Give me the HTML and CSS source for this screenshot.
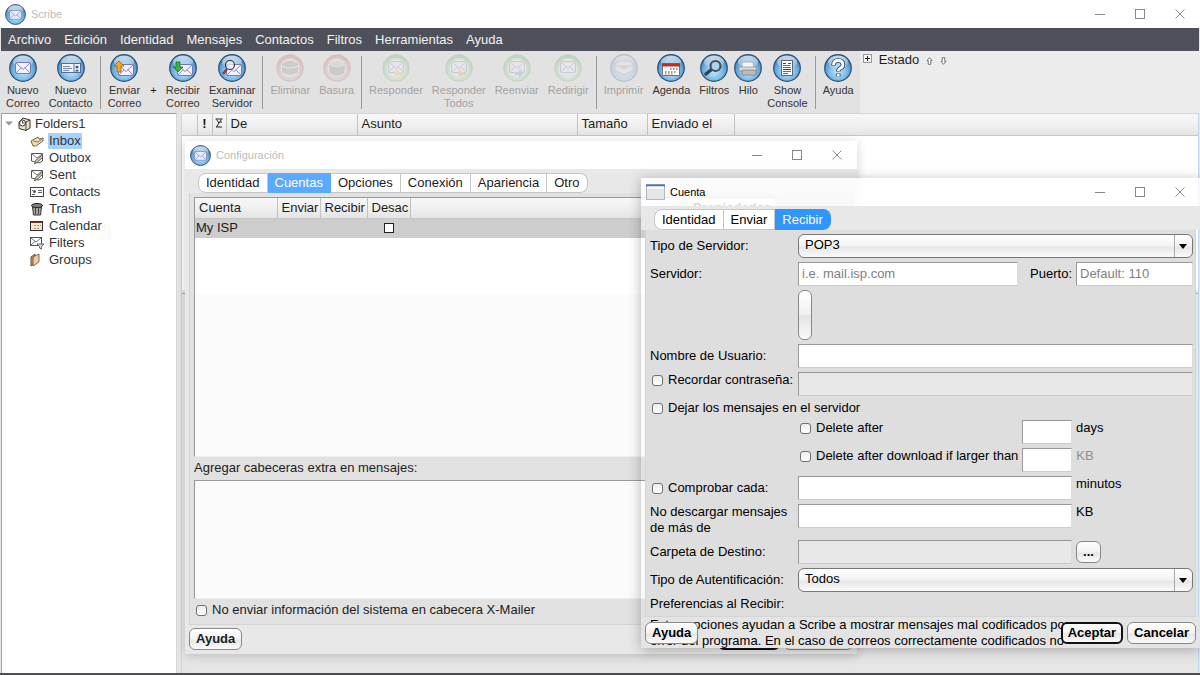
FILE: index.html
```
<!doctype html>
<html lang="es">

<head>
    <meta charset="UTF-8" />
    <meta name="viewport" content="width=device-width, initial-scale=1.0" />
    <title>Scribe</title>
    <link rel="stylesheet" href="styles.css">
</head>

<body>

    <!-- shared icon shapes -->
    <svg class="sprites" width="0" height="0" aria-hidden="true">
        <defs>
            <radialGradient id="blue" cx="50%" cy="62%" r="58%">
                <stop offset="0" stop-color="#c4ecff" />
                <stop offset="0.5" stop-color="#86c2ec" />
                <stop offset="0.85" stop-color="#5595ca" />
                <stop offset="1" stop-color="#346a99" />
            </radialGradient>
            <radialGradient id="red" cx="50%" cy="60%" r="58%">
                <stop offset="0" stop-color="#e0c8c8" />
                <stop offset="0.6" stop-color="#cfa0a0" />
                <stop offset="1" stop-color="#b03c3c" />
            </radialGradient>
            <radialGradient id="green" cx="50%" cy="60%" r="58%">
                <stop offset="0" stop-color="#e0f5e0" />
                <stop offset="0.6" stop-color="#a5dba5" />
                <stop offset="1" stop-color="#3ea03e" />
            </radialGradient>
            <linearGradient id="shine" x1="0" y1="0" x2="0" y2="1">
                <stop offset="0" stop-color="#fff" stop-opacity="0.75" />
                <stop offset="1" stop-color="#fff" stop-opacity="0.1" />
            </linearGradient>
        </defs>
        <symbol id="orb" viewBox="0 0 28 28">
            <circle cx="14" cy="14" r="13.3" fill="url(#blue)" stroke="#2b5076" stroke-width="1.2" />
            <ellipse cx="14" cy="8" rx="10" ry="6.5" fill="url(#shine)" />
        </symbol>
        <symbol id="orb-red" viewBox="0 0 28 28">
            <circle cx="14" cy="14" r="13.3" fill="url(#red)" stroke="#a55" />
            <circle cx="14" cy="14" r="9.5" fill="#ddd" />
        </symbol>
        <symbol id="orb-green" viewBox="0 0 28 28">
            <circle cx="14" cy="14" r="13.3" fill="url(#green)" stroke="#5a5" />
            <circle cx="14" cy="14" r="9.5" fill="#e4f0e4" />
        </symbol>
        <symbol id="mail" viewBox="0 0 16 12">
            <rect x="0.5" y="0.5" width="15" height="11" rx="1" fill="#f4f3ff" stroke="#7478b4" />
            <path d="M1 11l5.2-5.4M15 11L9.800 5.600M1 1l7 6.500L15 1" fill="none" stroke="#8488cc" />
        </symbol>
        <symbol id="sheet" viewBox="0 0 14 14">
            <path d="M1.500 2.500h11v7.500L9 12 1.500 10z" fill="#fff" stroke="#555" />
            <path d="M2 3l5 4 5-4" fill="none" stroke="#777" />
            <path d="M4.500 13l1-3.500 6-5 1.500 1.500-6 5.500z" fill="#d8c4a4" stroke="#444" stroke-width="0.8" />
        </symbol>
        <symbol id="min" viewBox="0 0 12 12"><path d="M1 6.500h10" stroke="currentColor" /></symbol>
        <symbol id="max" viewBox="0 0 12 12"><rect x="1.500" y="1.500" width="9" height="9" fill="none" stroke="currentColor" /></symbol>
        <symbol id="close" viewBox="0 0 12 12"><path d="M1.500 1.500l9 9M10.500 1.500l-9 9" stroke="currentColor" stroke-width="0.9" /></symbol>
    </svg>

    <div class="app">
        <header class="titlebar">
            <svg class="app-icon" viewBox="0 0 28 28"><use href="#orb" /><use href="#mail" x="5" y="8" width="18" height="13" opacity="0.8" /></svg>
            <span class="title faded">Scribe</span>
            <div class="winbtns">
                <button aria-label="Minimizar"><svg><use href="#min" /></svg></button>
                <button aria-label="Maximizar"><svg><use href="#max" /></svg></button>
                <button aria-label="Cerrar"><svg><use href="#close" /></svg></button>
            </div>
        </header>

        <nav class="menubar">
            <a href="#">Archivo</a>
            <a href="#">Edición</a>
            <a href="#">Identidad</a>
            <a href="#">Mensajes</a>
            <a href="#">Contactos</a>
            <a href="#">Filtros</a>
            <a href="#">Herramientas</a>
            <a href="#">Ayuda</a>
        </nav>

        <div class="toolrow">
            <div class="toolbar">
                <button class="tool">
                    <svg viewBox="0 0 28 28"><use href="#orb" /><use href="#mail" x="6" y="8" width="16" height="12" /></svg>
                    <span>Nuevo<br>Correo</span>
                </button>
                <button class="tool">
                    <svg viewBox="0 0 28 28"><use href="#orb" />
                        <rect x="4.500" y="9.500" width="19" height="9" fill="#f4f5fc" stroke="#566a94" />
                        <path d="M6 12.500h7M6 14.500h9M6 16.500h6" stroke="#7c86b4" />
                        <path d="M17 10v8" stroke="#566a94" /><circle cx="20" cy="13" r="1.500" fill="#43548a" /><path d="M18 17.500q2-4 4 0z" fill="#43548a" />
                    </svg>
                    <span>Nuevo<br>Contacto</span>
                </button>
                <span class="sep"></span>
                <button class="tool">
                    <svg viewBox="0 0 28 28"><use href="#orb" /><use href="#mail" x="8" y="10" width="16" height="12" />
                        <path d="M9 7l5 5h-3v6H7v-6H4z" fill="#f2a81c" stroke="#9a6410" stroke-width="0.8" /></svg>
                    <span>Enviar<br>Correo</span>
                </button>
                <span class="plus">+</span>
                <button class="tool">
                    <svg viewBox="0 0 28 28"><use href="#orb" /><use href="#mail" x="8" y="10" width="16" height="12" />
                        <path d="M9 18l-5-5h3V8h4v5h3z" fill="#35b83c" stroke="#17701e" stroke-width="0.8" /></svg>
                    <span>Recibir<br>Correo</span>
                </button>
                <button class="tool">
                    <svg viewBox="0 0 28 28"><use href="#orb" /><use href="#mail" x="8" y="10" width="16" height="12" />
                        <circle cx="12" cy="11" r="4.500" fill="#e8f4fc" fill-opacity="0.7" stroke="#333" stroke-width="1.200" /><path d="M9 15l-4 5" stroke="#8c3b30" stroke-width="2.400" /></svg>
                    <span>Examinar<br>Servidor</span>
                </button>
                <span class="sep"></span>
                <button class="tool" disabled>
                    <svg viewBox="0 0 28 28"><use href="#orb-red" /><path d="M6 10q8-7 16 0v8q-8 6-16 0z" fill="#888" /><path d="M6 12q8 4 16 0" stroke="#eee" fill="none" /></svg>
                    <span>Eliminar</span>
                </button>
                <button class="tool" disabled>
                    <svg viewBox="0 0 28 28"><use href="#orb-red" /><path d="M6 11q8 5 16 0l-1 8q-7 5-14 0z" fill="#777" /><ellipse cx="14" cy="10" rx="7" ry="3" fill="#bbb" /></svg>
                    <span>Basura</span>
                </button>
                <span class="sep"></span>
                <button class="tool" disabled>
                    <svg viewBox="0 0 28 28"><use href="#orb-green" /><use href="#mail" x="6" y="7" width="16" height="12" /><path d="M12 19l4-4v3h5v3h-5v3z" fill="#e6c84a" /></svg>
                    <span>Responder</span>
                </button>
                <button class="tool" disabled>
                    <svg viewBox="0 0 28 28"><use href="#orb-green" /><use href="#mail" x="6" y="7" width="16" height="12" /><path d="M12 19l4-4v3h5v3h-5v3z" fill="#e69a3a" /></svg>
                    <span>Responder<br>Todos</span>
                </button>
                <button class="tool" disabled>
                    <svg viewBox="0 0 28 28"><use href="#orb-green" /><use href="#mail" x="6" y="7" width="16" height="12" /><path d="M20 19l-4-4v3h-4v3h4v3z" fill="#6b8fd8" /></svg>
                    <span>Reenviar</span>
                </button>
                <button class="tool" disabled>
                    <svg viewBox="0 0 28 28"><use href="#orb-green" /><use href="#mail" x="6" y="7" width="16" height="12" /></svg>
                    <span>Redirigir</span>
                </button>
                <span class="sep"></span>
                <button class="tool" disabled>
                    <svg viewBox="0 0 28 28"><use href="#orb" /><path d="M5 10l5-3h9l4 3v6l-9 5-9-5z" fill="#eee" stroke="#888" /><path d="M5 11l9 5 9-5" fill="#aaa" /></svg>
                    <span>Imprimir</span>
                </button>
                <button class="tool">
                    <svg viewBox="0 0 28 28"><use href="#orb" /><rect x="5.500" y="9.500" width="17" height="12" fill="#fff" stroke="#777" /><path d="M5 11h18" stroke="#c22a22" stroke-width="3" />
                        <path d="M13 15h8M8 18h12" stroke="#777" stroke-width="1.500" stroke-dasharray="1.500 1.500" /><path d="M8 20h8" stroke="#c33" stroke-dasharray="1.500 1.500" /></svg>
                    <span>Agenda</span>
                </button>
                <button class="tool">
                    <svg viewBox="0 0 28 28"><use href="#orb" /><path d="M12 15l-6 5" stroke="#3c3f44" stroke-width="3.500" stroke-linecap="round" />
                        <circle cx="15.500" cy="12" r="5" fill="#a9d4f4" stroke="#4c4f55" stroke-width="2.200" /></svg>
                    <span>Filtros</span>
                </button>
                <button class="tool">
                    <svg viewBox="0 0 28 28"><use href="#orb" /><path d="M8 8h11l1 6H8z" fill="#f5f5f5" stroke="#999" stroke-width="0.700" /><path d="M5 13h17l1 4H5z" fill="#ddd" stroke="#888" stroke-width="0.700" /><rect x="8" y="16" width="14" height="5" rx="1" fill="#b8bcc0" stroke="#777" stroke-width="0.700" /></svg>
                    <span>Hilo</span>
                </button>
                <button class="tool">
                    <svg viewBox="0 0 28 28"><use href="#orb" /><rect x="8.500" y="6.500" width="11" height="15" fill="#fff" stroke="#666" /><path d="M10 9.500h3M15 9.500h3M10 15.500h8" stroke="#444" /><path d="M10 11.500h7M10 13.500h8M10 17.500h8M10 19.500h5" stroke="#d84040" /></svg>
                    <span>Show<br>Console</span>
                </button>
                <span class="sep"></span>
                <button class="tool">
                    <svg viewBox="0 0 28 28"><use href="#orb" /><path d="M9.500 11.500q0-5 4.700-5t4.700 4.200q0 2.300-2.600 3.600-2 1-2 3.200M14.200 19.500v3" fill="none" stroke="#2c4c6c" stroke-width="4.600" /><path d="M9.500 11q0-4.500 4.700-4.500t4.700 4.200q0 2.300-2.600 3.600-2 1-2 2.700M14.200 20v2.400" fill="none" stroke="#fff" stroke-width="2.800" /></svg>
                    <span>Ayuda</span>
                </button>
            </div>
            <div class="status">
                <svg class="expand" viewBox="0 0 9 9"><rect x="0.500" y="0.500" width="8" height="8" fill="#f6f6f6" stroke="#999" /><path d="M2 4.500h5M4.500 2v5" stroke="#222" /></svg>
                <span>Estado</span>
                <svg class="arrow" viewBox="0 0 7 8"><path d="M3.500 0.700L6 3.500H4.800v3.800H2.200V3.500H1z" fill="#fff" stroke="#555" stroke-width="0.800" /></svg>
                <svg class="arrow" viewBox="0 0 7 8"><path d="M3.500 7.300L6 4.500H4.800V0.700H2.200v3.800H1z" fill="#fff" stroke="#555" stroke-width="0.800" /></svg>
            </div>
        </div>

        <main class="content">
            <aside class="folders">
                <div class="folder root">
                    <svg class="twisty" viewBox="0 0 8 5"><path d="M0 0.500h8L4 4.500z" fill="#999" /></svg>
                    <svg class="ficon" viewBox="0 0 14 14"><path d="M2 5l4-4 7 2v8l-4 2.500-7-2z" fill="#eee0c4" stroke="#333" /><circle cx="5.500" cy="6" r="3" fill="#fff" stroke="#333" /><path d="M9 5v8M9 5l4-2M5.500 4v2h2" stroke="#444" fill="none" /></svg>
                    <span>Folders1</span>
                </div>
                <ul>
                    <li class="folder"><svg class="ficon" viewBox="0 0 14 14"><path d="M1 7l7-4 1 2 4-1v3l-7 5H3z" fill="#f0dcb8" stroke="#77644c" /><path d="M3 7l5 1 4-3" fill="none" stroke="#8c7a62" /></svg><a href="#" class="selected">Inbox</a></li>
                    <li class="folder"><svg class="ficon"><use href="#sheet" /></svg><a href="#">Outbox</a></li>
                    <li class="folder"><svg class="ficon"><use href="#sheet" /></svg><a href="#">Sent</a></li>
                    <li class="folder"><svg class="ficon" viewBox="0 0 14 14"><rect x="0.500" y="2.500" width="13" height="9" fill="#fff" stroke="#444" /><path d="M2 5.500h1M2 9.500h3M8 5.500h4M8 7.500h4" stroke="#666" /><circle cx="4.500" cy="6.500" r="1.500" fill="#555" /></svg><a href="#">Contacts</a></li>
                    <li class="folder"><svg class="ficon" viewBox="0 0 14 14"><path d="M2.500 5h9l-1 8h-7z" fill="#a8a69c" stroke="#333" /><path d="M5.500 6v6M8.500 6v6" stroke="#444" /><ellipse cx="7" cy="3.500" rx="5.500" ry="2" fill="#84827a" stroke="#222" /><path d="M5.500 1.500h3" stroke="#222" /></svg><a href="#">Trash</a></li>
                    <li class="folder"><svg class="ficon" viewBox="0 0 14 14"><rect x="0.500" y="2.500" width="12" height="9" fill="#f2e6d0" stroke="#333" /><path d="M1 3.500h11" stroke="#6b3a2e" /><path d="M4 6.500h7M4 9.500h5" stroke="#b38f6a" stroke-dasharray="2 1" /></svg><a href="#">Calendar</a></li>
                    <li class="folder"><svg class="ficon" viewBox="0 0 14 14"><rect x="0.500" y="1.500" width="11" height="8" fill="#fff" stroke="#555" /><path d="M1 2l5 4 5-4M1 9l4-3.500" fill="none" stroke="#777" /><path d="M7 8h7l-2.500 2.500V13L9.500 12v-1.500z" fill="#ddd" stroke="#444" stroke-width="0.800" /></svg><a href="#">Filters</a></li>
                    <li class="folder"><svg class="ficon" viewBox="0 0 14 14"><path d="M1 4l4-3v9l-4 3z" fill="#c99b70" stroke="#6b4a30" /><path d="M3 4l6-3v8l-6 4z" fill="#ecc9a0" stroke="#6b4a30" stroke-width="0.800" /></svg><a href="#">Groups</a></li>
                </ul>
            </aside>

            <section class="mail">
                <table class="grid maillist">
                    <colgroup><col class="w15"><col class="w15"><col class="w14"><col class="w-from"><col class="w-subject"><col class="w-size"><col class="w-date"><col></colgroup>
                    <thead>
                        <tr>
                            <th></th>
                            <th class="mark">!</th>
                            <th class="mark"><svg class="flag" viewBox="0 0 8 10"><path d="M0.500 1h7M1.500 1.500L4 5 1.500 9M6.500 1.500L4 5M1 9h6M5 4h2" fill="none" stroke="#222" /></svg></th>
                            <th>De</th>
                            <th>Asunto</th>
                            <th>Tamaño</th>
                            <th>Enviado el</th>
                            <th></th>
                        </tr>
                    </thead>
                </table>
                <div class="messages"></div>
                <div class="preview"></div>
            </section>
        </main>
    </div>

    <section class="window config">
        <header class="titlebar">
            <svg class="app-icon" viewBox="0 0 28 28"><use href="#orb" /><use href="#mail" x="5" y="8" width="18" height="13" opacity="0.8" /></svg>
            <span class="title faded">Configuración</span>
            <div class="winbtns">
                <button aria-label="Minimizar"><svg><use href="#min" /></svg></button>
                <button aria-label="Maximizar"><svg><use href="#max" /></svg></button>
                <button aria-label="Cerrar"><svg><use href="#close" /></svg></button>
            </div>
        </header>
        <div class="tabs">
            <button>Identidad</button>
            <button class="active">Cuentas</button>
            <button>Opciones</button>
            <button>Conexión</button>
            <button>Apariencia</button>
            <button>Otro</button>
        </div>
        <div class="panel">
            <div class="accounts">
                <div class="account-list">
                    <table class="grid">
                        <colgroup><col class="w-account"><col class="w-send"><col class="w-receive"><col class="w-send"><col></colgroup>
                        <thead>
                            <tr><th>Cuenta</th><th>Enviar</th><th>Recibir</th><th>Desac</th><th></th></tr>
                        </thead>
                        <tbody>
                            <tr><td>My ISP</td><td></td><td></td><td class="center"><input type="checkbox" class="square" aria-label="Desactivar My ISP"></td><td></td></tr>
                        </tbody>
                    </table>
                </div>
                <div class="actions"><button class="btn plain">Propiedades</button></div>
            </div>
            <label class="block" for="headers">Agregar cabeceras extra en mensajes:</label>
            <textarea id="headers"></textarea>
            <label class="check"><input type="checkbox">No enviar información del sistema en cabecera X-Mailer</label>
        </div>
        <footer class="buttons">
            <button class="btn">Ayuda</button>
            <span class="spacer"></span>
            <button class="btn default">Aceptar</button>
            <button class="btn">Cancelar</button>
        </footer>
    </section>

    <section class="window account">
        <header class="titlebar">
            <svg class="form-icon" viewBox="0 0 19 16"><rect x="0.500" y="0.500" width="18" height="15" fill="#e4e6ea" stroke="#b4b8bc" /><path d="M0 1.500h19" stroke="#4a74b4" stroke-width="2" /><path d="M1 3.500h17" stroke="#fff" stroke-width="2" /></svg>
            <span class="title">Cuenta</span>
            <div class="winbtns">
                <button aria-label="Minimizar"><svg><use href="#min" /></svg></button>
                <button aria-label="Maximizar"><svg><use href="#max" /></svg></button>
                <button aria-label="Cerrar"><svg><use href="#close" /></svg></button>
            </div>
        </header>
        <div class="tabs">
            <button>Identidad</button>
            <button>Enviar</button>
            <button class="active">Recibir</button>
        </div>
        <form class="panel form">
            <label for="type">Tipo de Servidor:</label>
            <div class="combo"><select id="type"><option>POP3</option><option>IMAP</option></select></div>

            <label for="server">Servidor:</label>
            <div class="row">
                <input type="text" id="server" placeholder="i.e. mail.isp.com">
                <label class="port" for="port">Puerto:</label>
                <input type="text" id="port" class="unit" placeholder="Default: 110">
            </div>

            <span></span>
            <button type="button" class="slim" aria-label="Seguridad"></button>

            <label for="user">Nombre de Usuario:</label>
            <input type="text" id="user">

            <label class="check top"><input type="checkbox">Recordar contraseña:</label>
            <input type="password" aria-label="Contraseña" disabled>

            <label class="check wide"><input type="checkbox">Dejar los mensajes en el servidor</label>

            <span></span>
            <div class="row top">
                <label class="check"><input type="checkbox">Delete after</label>
                <input type="text" class="short" id="days">
                <label class="unit" for="days">days</label>
            </div>

            <span></span>
            <div class="row top">
                <label class="check"><input type="checkbox">Delete after download if larger than</label>
                <input type="text" class="short" id="larger">
                <label class="unit dim" for="larger">KB</label>
            </div>

            <label class="check"><input type="checkbox">Comprobar cada:</label>
            <div class="row top">
                <input type="text" id="minutes">
                <label class="unit" for="minutes">minutos</label>
            </div>

            <label for="limit">No descargar mensajes de más de</label>
            <div class="row top">
                <input type="text" id="limit">
                <label class="unit" for="limit">KB</label>
            </div>

            <label for="folder">Carpeta de Destino:</label>
            <div class="row">
                <input type="text" id="folder" disabled>
                <div class="unit"><button type="button" class="btn browse">...</button></div>
            </div>

            <label for="auth">Tipo de Autentificación:</label>
            <div class="combo"><select id="auth"><option>Todos</option></select></div>

            <span class="wide">Preferencias al Recibir:</span>
        </form>
        <footer class="overlap">
            <p>Estas opciones ayudan a Scribe a mostrar mensajes mal codificados por un<br>error del programa. En el caso de correos correctamente codificados no</p>
            <div class="buttons">
                <button class="btn">Ayuda</button>
                <span class="spacer"></span>
                <button class="btn default">Aceptar</button>
                <button class="btn">Cancelar</button>
            </div>
        </footer>
    </section>

</body>

</html>
```

FILE: styles.css
```
* {
    box-sizing: border-box;
}

body {
    margin: 0;
    font-family: "Liberation Sans", Arial, sans-serif;
    font-size: 13px;
    line-height: 16px;
    color: #1c1c1c;
    background: #e6e6e6;
}

button,
input,
select,
textarea {
    font: inherit;
    color: inherit;
    margin: 0;
}

a {
    color: inherit;
    text-decoration: none;
}

.sprites {
    position: absolute;
}

.app {
    display: flex;
    flex-direction: column;
    height: 100vh;
    border-bottom: 2px solid #4e4e50;
    overflow: hidden;
}

/* title bars */
.titlebar {
    display: flex;
    align-items: center;
    height: 28px;
    flex: none;
    padding-left: 5px;
    background: #fff;
}

.title {
    margin-left: 5px;
    font-size: 11px;
}

.faded {
    color: #bcbcbc;
}

.app-icon {
    width: 21px;
    height: 21px;
}

.form-icon {
    width: 19px;
    height: 16px;
}

.winbtns {
    display: flex;
    margin-left: auto;
}

.winbtns button {
    width: 40px;
    height: 26px;
    padding: 0;
    border: 0;
    background: none;
    color: #868686;
}

.winbtns svg {
    display: block;
    width: 12px;
    height: 12px;
    margin: auto;
}

.menubar {
    display: flex;
    gap: 13px;
    flex: none;
    height: 23px;
    margin: 0 1px;
    padding-left: 7px;
    line-height: 23px;
    color: #f2f2f2;
    background: #4e5159;
}

/* toolbar */
.toolrow {
    display: flex;
    flex: none;
    height: 62px;
    background: #ececec;
}

.toolbar {
    display: flex;
    gap: 1px;
    padding: 3px 2px 0;
    background: #e2e2e2;
}

.tool {
    display: flex;
    flex-direction: column;
    align-items: center;
    gap: 2px;
    min-width: 28px;
    padding: 0 4px;
    border: 0;
    background: none;
    font-size: 11px;
    line-height: 13px;
    color: #333;
}

.tool svg {
    width: 28px;
    height: 28px;
    margin: 0 -4px;
    flex: none;
}

.tool:disabled {
    color: #a2a2a2;
}

.tool:disabled svg {
    opacity: 0.22;
}

.plus {
    padding: 30px 4px 0;
    font-size: 11px;
    line-height: 13px;
}

.sep {
    width: 1px;
    margin: 2px 2px 4px;
    background: #999;
}

.status {
    display: flex;
    align-items: flex-start;
    gap: 7px;
    padding: 1px 3px;
}

.expand {
    width: 9px;
    height: 9px;
    margin-top: 2px;
}

.arrow {
    width: 7px;
    height: 8px;
    margin-top: 5px;
}

/* folders and message list */
.content {
    display: flex;
    flex: 1;
    gap: 4px;
    padding: 0 1px;
    background: #e6e6e6;
}

.folders {
    width: 176px;
    flex: none;
    border: 1px solid #a0a0a0;
    border-right-color: #d8d8d8;
    border-bottom: 0;
    padding: 1px 3px;
    background: #fff;
    color: #333;
}

.folders ul {
    margin: 0;
    padding: 0 0 0 25px;
    list-style: none;
}

.folder {
    display: flex;
    align-items: center;
    gap: 4px;
    height: 17px;
}

.folder a {
    padding: 0 1px;
}

.twisty {
    width: 8px;
    height: 5px;
}

.ficon {
    width: 14px;
    height: 14px;
    flex: none;
}

.folder .selected {
    background: #a5d2ff;
}

.mail {
    display: flex;
    flex-direction: column;
    flex: 1;
    border: 1px solid #c4d8ec;
    border-bottom: 0;
}

.grid {
    width: 100%;
    table-layout: fixed;
    border-collapse: collapse;
}

.grid th {
    height: 20px;
    padding: 0 0 0 4px;
    border-right: 1px solid #c2c2c2;
    border-bottom: 1px solid #c6c6c6;
    font-weight: normal;
    text-align: left;
    white-space: nowrap;
    background: linear-gradient(#f7f7f7, #f0f0f0 50%, #e4e4e4);
}

.grid th:last-child {
    border-right: 0;
}

.grid th.mark {
    padding: 0;
    text-align: center;
    font-weight: bold;
}

.maillist th {
    height: 21px;
}

.flag {
    width: 8px;
    height: 10px;
}

.w15 {
    width: 15px;
}

.w14 {
    width: 14px;
}

.w-from {
    width: 131px;
}

.w-subject {
    width: 220px;
}

.w-size {
    width: 70px;
}

.w-date {
    width: 87px;
}

.messages {
    height: 154px;
    background: #fff;
}

.preview {
    flex: 1;
    margin-top: 3px;
    border-top: 1px solid #aaa;
    background: #e6e6e6;
}

/* dialogs */
.window {
    position: absolute;
    isolation: isolate;
    background: #e8e8e8;
}

.config {
    top: 141px;
    left: 185px;
    width: 56%;
    box-shadow: 0 2px 10px rgba(0, 0, 0, 0.18);
}

.account {
    top: 178px;
    left: 641px;
    right: 0;
    background: none;
    color: #000;
    box-shadow: 0 2px 12px rgba(0, 0, 0, 0.28);
}

.account .titlebar {
    background: rgba(255, 255, 255, 0.8);
}

.tabs {
    position: relative;
    z-index: 1;
    display: flex;
    height: 24px;
    padding: 4px 13px 0;
}

.account .tabs {
    padding-top: 3px;
}

.tabs::before {
    content: "";
    position: absolute;
    z-index: -1;
    inset: 0;
    background: #e8e8e8;
}

.tabs button {
    padding: 0 7px;
    border: 1px solid #c6c6c6;
    border-left-width: 0;
    background: #fff;
    white-space: nowrap;
}

.tabs button:first-child {
    border-left-width: 1px;
    border-radius: 8px 0 0 8px;
}

.tabs button:last-child {
    border-radius: 0 8px 8px 0;
}

.tabs .active {
    color: #fff;
    border-color: #5aaaff;
    background: #5aaaff;
}

.account .tabs .active {
    border-color: #3096fb;
    background: #3096fb;
}

.panel {
    margin: 0 4px;
    border: 1px solid #d4d4d4;
    border-top: 0;
    background: #e1e1e1;
}

.config .panel {
    padding: 4px 4px 6px;
}

.accounts {
    display: flex;
    align-items: flex-start;
    gap: 6px;
}

.actions {
    width: 162px;
}

.account-list {
    flex: 1;
    height: 260px;
    border: 1px solid #999;
    border-right-color: #eee;
    border-bottom-color: #eee;
    background: linear-gradient(#fff 96px, #fbfbfb 96px);
}

.account-list tbody {
    background: #cdcdcd;
}

.account-list td {
    height: 20px;
    padding: 0 1px;
}

.account-list .center {
    text-align: center;
}

.w-account {
    width: 82px;
}

.w-send {
    width: 43px;
}

.w-receive {
    width: 47px;
}

.block {
    display: block;
    padding: 3px 0 4px;
}

textarea {
    display: block;
    width: 100%;
    height: 119px;
    border: 1px solid #999;
    border-right-color: #eee;
    border-bottom-color: #eee;
    background: #fbfbfb;
    resize: none;
}

.config .check {
    margin-top: 3px;
}

.check {
    display: flex;
    align-items: center;
    gap: 5px;
    white-space: nowrap;
}

input[type="checkbox"] {
    appearance: none;
    flex: none;
    width: 11px;
    height: 11px;
    margin-left: 2px;
    border: 1px solid #707070;
    border-radius: 3px;
    background: linear-gradient(#ececec, #fff);
}

input[type="checkbox"].square {
    display: block;
    width: 10px;
    height: 10px;
    margin: 0 auto;
    border-color: #222;
    border-radius: 0;
    background: #fff;
}

.buttons {
    display: flex;
    align-items: flex-start;
    gap: 4px;
    padding: 3px 4px 4px;
}

.spacer {
    flex: 1;
}

.btn {
    height: 22px;
    padding: 0 6px;
    border: 1px solid #888;
    border-radius: 6px;
    font-weight: bold;
    line-height: 18px;
    background: linear-gradient(#fff, #f2f2f2 50%, #e6e6e6 55%, #fafafa);
}

.btn.default {
    border: 2px solid #111;
    padding: 0 5px;
    line-height: 16px;
}

.btn.plain {
    border-color: #bbb;
    color: #444;
}

/* account form */
.form {
    display: grid;
    grid-template-columns: 144px minmax(0, 1fr);
    align-items: center;
    gap: 4px;
    padding: 4px 2px 4px 4px;
    background: #dedede;
}

.wide {
    grid-column: 1 / 3;
}

.form > .top {
    align-self: start;
}

.row {
    display: flex;
    align-items: center;
    gap: 4px;
}

.row.top {
    align-items: flex-start;
}

.form input[type="text"],
.form input[type="password"] {
    width: 100%;
    min-width: 0;
    height: 24px;
    padding: 0 3px 2px;
    border: 1px solid #999;
    border-right-color: #ddd;
    border-bottom-color: #ccc;
    background: #fff;
}

.form input:disabled {
    background: #e8e8e8;
}

.form input::placeholder {
    color: #808080;
}

.port {
    flex: none;
    width: 50px;
    text-align: right;
}

.form .row .unit {
    flex: none;
    width: 117px;
}

.form .row .short {
    flex: none;
    width: 50px;
    margin-left: auto;
}

.dim {
    color: #909090;
}

.slim {
    width: 14px;
    height: 50px;
    padding: 0;
    border: 1px solid #888;
    border-radius: 6px;
    background: linear-gradient(#fff, #f0f0f0 50%, #e4e4e4 52%, #fafafa);
}

.combo {
    position: relative;
}

.combo select {
    display: block;
    appearance: none;
    width: 100%;
    height: 24px;
    padding: 0 6px 2px;
    border: 1px solid #777;
    border-radius: 6px;
    background:
        linear-gradient(#aaa, #aaa) right 17px top / 1px 100% no-repeat,
        linear-gradient(#fff, #f2f2f2 50%, #e6e6e6 55%, #fafafa);
}

.combo::after {
    content: "";
    position: absolute;
    right: 6px;
    top: 10px;
    border: 4px solid transparent;
    border-top: 5px solid #000;
    border-bottom: 0;
    pointer-events: none;
}

.browse {
    width: 25px;
    display: block;
}

/* help text runs underneath the dialog buttons */
.overlap {
    display: grid;
    height: 31px;
    overflow: hidden;
    background: #e4e4e4;
}

.overlap > * {
    grid-area: 1 / 1;
}

.overlap p {
    margin: 0;
    padding-left: 9px;
    white-space: nowrap;
}

.overlap .buttons {
    padding-top: 5px;
}
```
